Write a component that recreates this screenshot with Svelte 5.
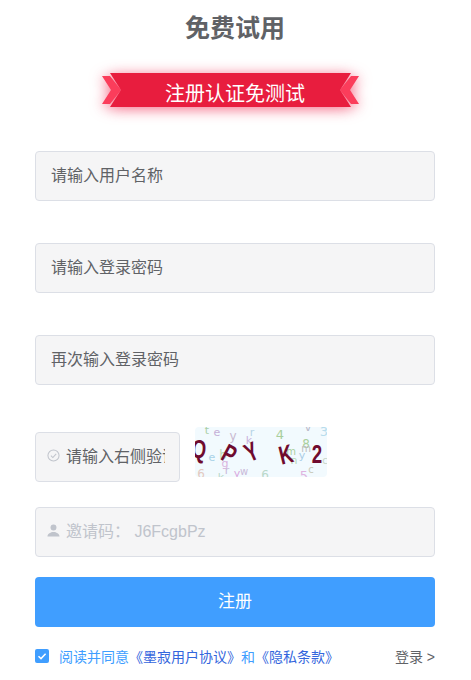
<script>
    let username = $state("");
    let password = $state("");
    let confirm = $state("");
    let code = $state("");
    let invite = $state("");
    let agreed = $state(true);

    // noise letters behind the captcha: [char, x, y, size, colour]
    const noise = [
        ["t", 12, 7, 11, "#a9cfa5"], ["e", 22, 9, 11, "#c5b0d8"], ["y", 38, 13, 12, "#c9b9d0"],
        ["r", 57, 9, 11, "#b7d4e6"], ["k", 54, 17, 11, "#c9b3dc"], ["4", 85, 12, 13, "#a9cf9c"],
        ["v", 113, 4, 11, "#b9b9c9"], ["3", 129, 9, 13, "#b8dcec"], ["e", 17, 34, 11, "#a9d3e8"],
        ["b", 28, 32, 12, "#b9d8b9"], ["g", 30, 40, 11, "#d9b3e0"], ["8", 111, 21, 12, "#a9cf9c"],
        ["m", 111, 25, 10, "#bcbcbc"], ["m", 96, 28, 10, "#a9cf9c"], ["y", 107, 32, 11, "#a9cde6"],
        ["n", 99, 37, 11, "#b5d8b5"], ["c", 116, 46, 10, "#c9c9b9"], ["c", 130, 37, 10, "#c9d6c9"],
        ["6", 6, 51, 12, "#e3c9c0"], ["k", 26, 54, 11, "#b9d8c9"], ["r", 32, 47, 11, "#c9b9d9"],
        ["y", 42, 50, 11, "#d9a9e0"], ["w", 49, 48, 10, "#c9b9d9"], ["6", 70, 52, 12, "#b9d8c9"],
        ["5", 109, 53, 13, "#dfb3e0"]
    ];
    // the actual code, darker and rotated: [char, x, y, angle]
    const letters = [
        ["Q", 3, 31, 6], ["P", 30, 35, 28], ["Y", 60, 33, -24],
        ["K", 93, 36, -14], ["2", 122, 36, 0]
    ];
</script>

<main class="page">
    <h1>免费试用</h1>

    <div class="ribbon">
        <svg class="ribbon-art" viewBox="0 0 262 40" aria-hidden="true">
            <polygon points="2,6 10,6 21,20 10,34 2,34 11,20" fill="#fb3d5b" />
            <polygon points="259,6 251,6 240,20 251,34 259,34 250,20" fill="#fb3d5b" />
            <polygon points="10,3 251,3 240,20 251,37 10,37 21,20" fill="#e81d3e" />
        </svg>
        <span>注册认证免测试</span>
    </div>

    <form class="form" onsubmit={(e) => e.preventDefault()}>
        <input class="field" type="text" placeholder="请输入用户名称" bind:value={username} />
        <input class="field" type="password" placeholder="请输入登录密码" bind:value={password} />
        <input class="field" type="password" placeholder="再次输入登录密码" bind:value={confirm} />

        <div class="captcha-row">
            <label class="with-icon code-box">
                <svg class="icon" viewBox="0 0 14 14" aria-hidden="true">
                    <circle cx="7" cy="7" r="6" fill="none" stroke="#c0c4cc" stroke-width="1.1" />
                    <path d="M4.2 7.2 6.3 9.2 9.9 5.3" fill="none" stroke="#c0c4cc" stroke-width="1.1" />
                </svg>
                <input type="text" placeholder="请输入右侧验证码" bind:value={code} />
            </label>
            <svg class="captcha" viewBox="0 0 132 50" role="img" aria-label="验证码">
                <rect width="132" height="50" rx="4" fill="#f2fafe" />
                {#each noise as [ch, x, y, size, colour]}
                    <text {x} {y} font-size={size} fill={colour} text-anchor="middle">{ch}</text>
                {/each}
                {#each letters as [ch, x, y, angle]}
                    <text class="code-char" font-size="26" text-anchor="middle" transform="translate({x} {y}) rotate({angle}) scale(0.72 1)">{ch}</text>
                {/each}
            </svg>
        </div>

        <label class="with-icon invite">
            <svg class="icon" viewBox="0 0 14 14" aria-hidden="true">
                <circle cx="7" cy="3.8" r="3.2" fill="#c0c4cc" />
                <path d="M0.5 13.5C0.5 10.5 3.5 9.4 5.5 8.6H8.5C10.5 9.4 13.5 10.5 13.5 13.5Z" fill="#c0c4cc" />
            </svg>
            <input type="text" placeholder="邀请码： J6FcgbPz" bind:value={invite} />
        </label>

        <button type="submit" class="submit">注册</button>

        <div class="foot">
            <label class="agree">
                <input type="checkbox" bind:checked={agreed} />
                <span class="box">
                    <svg viewBox="0 0 14 14" aria-hidden="true">
                        <path d="M3.5 7.2 6 9.6 10.6 4.8" fill="none" stroke="#fff" stroke-width="1.5" />
                    </svg>
                </span>
                <span class="terms">阅读并同意<a href="#terms">《墨寂用户协议》</a>和<a href="#privacy">《隐私条款》</a></span>
            </label>
            <a class="login" href="#login">登录 &gt;</a>
        </div>
    </form>
</main>

<style>
    :global(body) {
        background: #fff;
        font-family: "Liberation Sans", "Noto Sans CJK SC", sans-serif;
    }
    .page {
        width: 400px;
        height: 680px;
        padding-left: 35px;
        overflow: hidden;
    }
    h1 {
        margin: 12px 0 0;
        font-size: 25px;
        line-height: 32px;
        font-weight: 700;
        text-align: center;
        color: #606266;
    }
    .ribbon {
        position: relative;
        display: flex;
        align-items: center;
        justify-content: center;
        width: 262px;
        height: 40px;
        margin: 26px 0 0 65px;
        padding: 4px 0 0 8px;
        box-sizing: border-box;
        color: #fff;
        font-size: 20px;
    }
    .ribbon-art {
        position: absolute;
        inset: 0;
        width: 100%;
        height: 100%;
        overflow: visible;
        filter: drop-shadow(0 2px 7px rgba(240, 40, 80, 0.7));
    }
    .ribbon span {
        position: relative;
    }
    .form {
        display: flex;
        flex-direction: column;
        margin-top: 41px;
    }
    .field,
    .with-icon {
        height: 50px;
        box-sizing: border-box;
        border: 1px solid #dcdfe6;
        border-radius: 4px;
        background: #f5f5f6;
        font: inherit;
        font-size: 16px;
        color: #606266;
    }
    .field {
        width: 100%;
        margin-bottom: 42px;
        padding: 0 15px;
        outline: none;
    }
    input::placeholder {
        color: #606266;
        opacity: 1;
    }
    .with-icon {
        display: flex;
        align-items: center;
        gap: 6px;
        padding: 0 14px 0 11px;
    }
    .with-icon input {
        flex: 1;
        min-width: 0;
        padding: 0;
        border: none;
        outline: none;
        background: transparent;
        font: inherit;
        color: inherit;
    }
    .icon {
        flex: none;
        width: 13px;
        height: 13px;
        margin-top: -4px;
    }
    .captcha-row {
        display: flex;
        align-items: flex-start;
        gap: 15px;
        margin-top: 5px;
    }
    .code-box {
        width: 145px;
    }
    .captcha {
        width: 132px;
        height: 50px;
        margin-top: -5px;
        font-family: "DejaVu Sans", sans-serif;
    }
    .code-char {
        font-family: "Liberation Sans", sans-serif;
        font-weight: 700;
        fill: #6f0b2e;
    }
    .invite {
        margin-top: 25px;
    }
    .invite input::placeholder {
        color: #c0c4cc;
    }
    .submit {
        height: 50px;
        margin-top: 20px;
        padding: 0 0 5px;
        border: none;
        border-radius: 4px;
        background: #409eff;
        color: #fff;
        font: inherit;
        font-size: 17px;
        cursor: pointer;
    }
    .foot {
        display: flex;
        align-items: center;
        justify-content: space-between;
        margin-top: 18px;
        font-size: 14px;
    }
    .agree {
        display: flex;
        align-items: center;
        gap: 10px;
        color: #409eff;
        cursor: pointer;
    }
    .agree input {
        display: none;
    }
    .box {
        width: 14px;
        height: 14px;
        border-radius: 2px;
        background: #409eff;
    }
    .box svg {
        display: block;
    }
    .terms a {
        color: #3366dd;
        text-decoration: none;
    }
    .login {
        margin-top: 1px;
        color: #606266;
        text-decoration: none;
    }
</style>
